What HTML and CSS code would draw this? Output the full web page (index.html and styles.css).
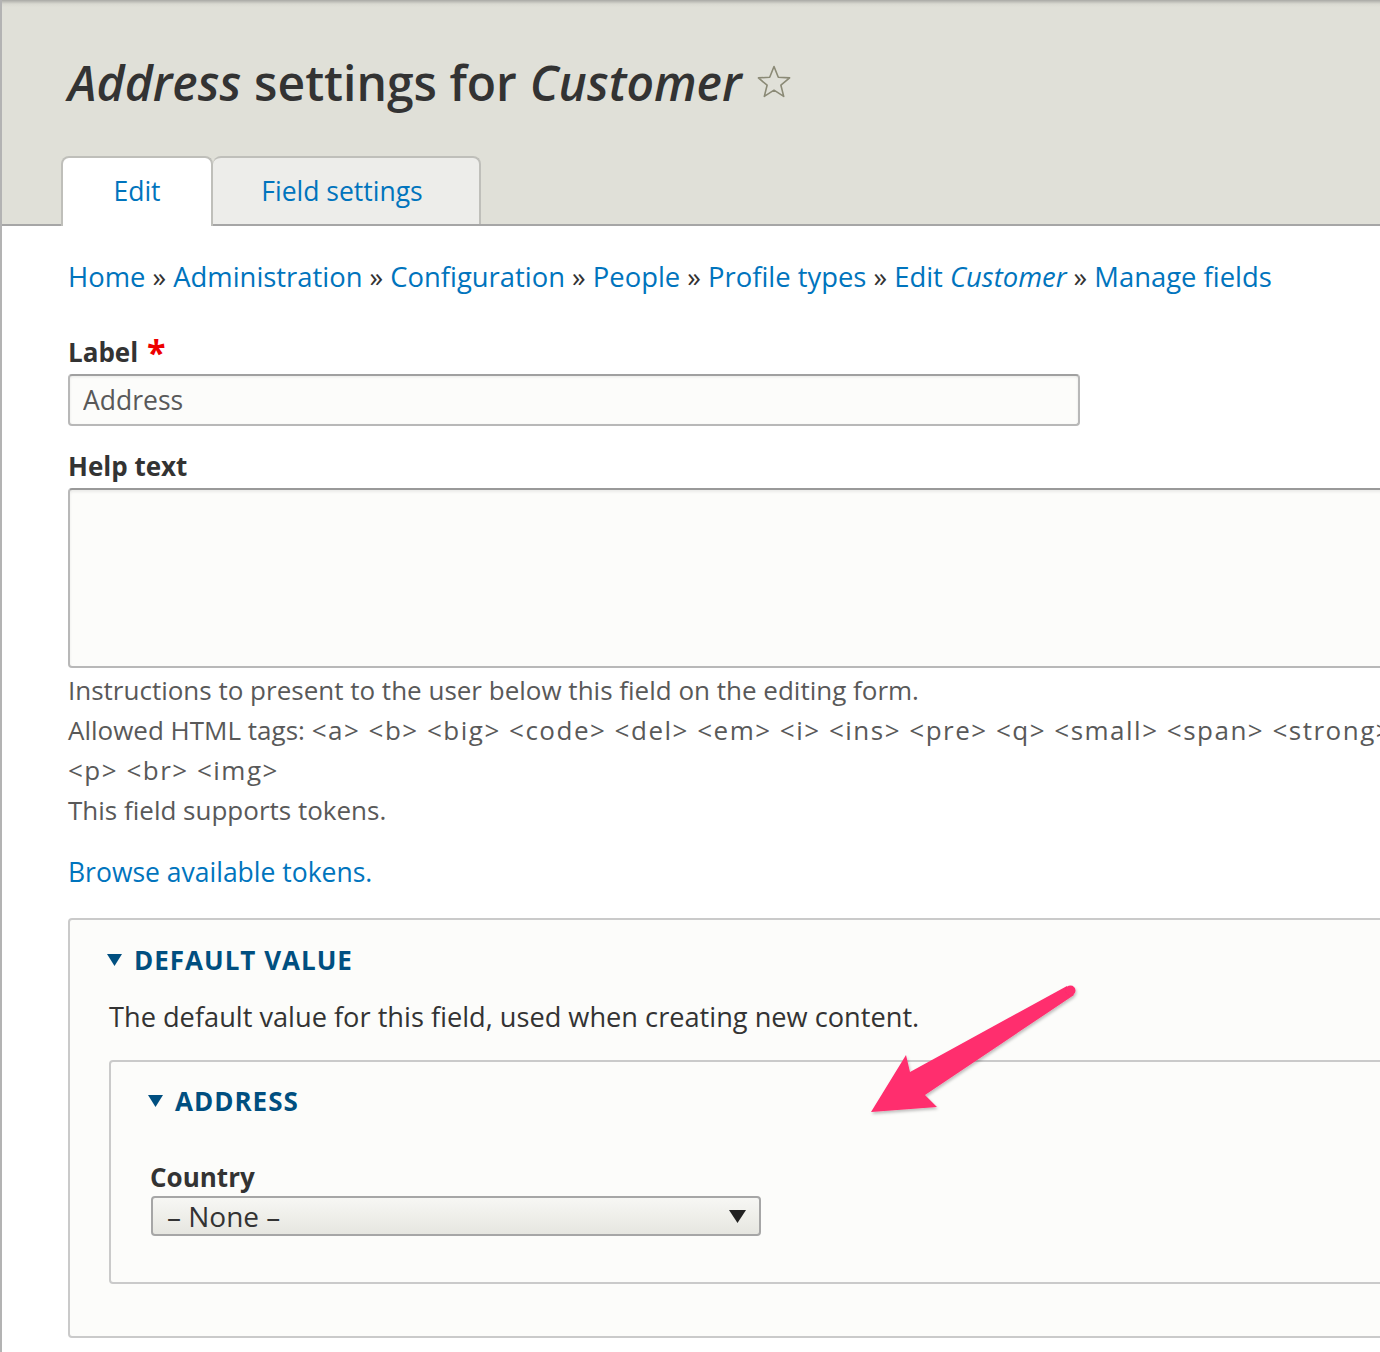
FILE: index.html
```html
<!DOCTYPE html>
<html lang="en">
<head>
<meta charset="utf-8">
<title>Address settings for Customer</title>
<link rel="stylesheet" href="styles.css">
</head>
<body>
<div class="page">
  <header class="header">
    <h1 class="title"><em>Address</em> settings for <em>Customer</em><svg class="star" viewBox="0 0 36 36" width="36" height="36" aria-hidden="true"><path d="M18 2.5 L22.3 13.2 L33.6 13.9 L24.9 21.2 L27.7 32.4 L18 26.2 L8.3 32.4 L11.1 21.2 L2.4 13.9 L13.7 13.2 Z" fill="none" stroke="#8b8a76" stroke-width="1.6" stroke-linejoin="round"/></svg></h1>
    <ul class="tabs">
      <li class="tab active"><a href="#">Edit</a></li>
      <li class="tab"><a href="#">Field settings</a></li>
    </ul>
  </header>

  <main class="main">
    <nav class="breadcrumb"><a href="#">Home</a><span class="sep"> » </span><a href="#">Administration</a><span class="sep"> » </span><a href="#">Configuration</a><span class="sep"> » </span><a href="#">People</a><span class="sep"> » </span><a href="#">Profile types</a><span class="sep"> » </span><a href="#">Edit <em>Customer</em></a><span class="sep"> » </span><a href="#">Manage fields</a></nav>

    <label class="label label-first" for="label">Label <span class="req">*</span></label>
    <input class="text-input" id="label" type="text" value="Address">

    <label class="label label-help" for="help">Help text</label>
    <textarea class="textarea" id="help"></textarea>
    <div class="description">
      <div>Instructions to present to the user below this field on the editing form.</div>
      <div>Allowed HTML tags: <span class="tags">&lt;a&gt; &lt;b&gt; &lt;big&gt; &lt;code&gt; &lt;del&gt; &lt;em&gt; &lt;i&gt; &lt;ins&gt; &lt;pre&gt; &lt;q&gt; &lt;small&gt; &lt;span&gt; &lt;strong&gt; &lt;sub&gt; &lt;sup&gt; &lt;tt&gt; &lt;ol&gt; &lt;ul&gt; &lt;li&gt;<br>&lt;p&gt; &lt;br&gt; &lt;img&gt;</span></div>
      <div>This field supports tokens.</div>
    </div>
    <a class="browse" href="#">Browse available tokens.</a>

    <section class="fieldset">
      <div class="summary"><svg class="tri" viewBox="0 0 15 12" width="15" height="12" aria-hidden="true"><path d="M0 0 H15 L7.5 12 Z" fill="#004f80"/></svg>Default value</div>
      <p class="fs-desc">The default value for this field, used when creating new content.</p>
      <section class="fieldset inner">
        <div class="summary"><svg class="tri" viewBox="0 0 15 12" width="15" height="12" aria-hidden="true"><path d="M0 0 H15 L7.5 12 Z" fill="#004f80"/></svg>Address</div>
        <div class="label label-country">Country</div>
        <div class="select"><span>– None –</span><svg viewBox="0 0 17 13" width="17" height="13" aria-hidden="true"><path d="M0 0 H17 L8.5 13 Z" fill="#222"/></svg></div>
      </section>
    </section>
  </main>

  <svg class="annot" viewBox="0 0 1380 1352" width="1380" height="1352" aria-hidden="true">
    <defs>
      <filter id="sh" x="-10%" y="-10%" width="130%" height="130%">
        <feDropShadow dx="1" dy="2" stdDeviation="1.5" flood-color="#000" flood-opacity="0.25"/>
      </filter>
    </defs>
    <g filter="url(#sh)" fill="#ff2d6e">
      <path d="M1067 986 L910 1072 L906 1055 L871 1112 L937 1107 L925 1095 L1074 995 Z"/>
      <circle cx="1070.5" cy="990.5" r="5"/>
    </g>
  </svg>
</div>
</body>
</html>
```
FILE: styles.css
```css
* { box-sizing: border-box; }
html, body { margin: 0; padding: 0; }
body {
  font-family: "Open Sans", Lato, "Liberation Sans", sans-serif;
  color: #333;
  background: #fff;
  width: 1380px;
  height: 1352px;
  overflow: hidden;
}
a { color: #0074bd; text-decoration: none; }

.page {
  position: relative;
  border-left: 2px solid #b3b3b3;
  min-height: 1352px;
  overflow: hidden;
}

/* Header */
.header {
  height: 226px;
  padding-top: 55px;
  background: linear-gradient(#a9a9a5 0, #d9d9d1 4px, #e0e0d8 7px, #e0e0d8);
  border-bottom: 2px solid #a6a6a6;
}
.title {
  margin: 0 0 0 66px;
  font-size: 48px;
  line-height: 56px;
  font-weight: 600;
  color: #333;
  white-space: nowrap;
  display: flex;
  align-items: center;
}
.title em { font-style: italic; }
.title em:first-child { margin-right: 13px; }
.title em:last-of-type { margin-left: 13px; }
.star { margin-left: 14px; margin-top: -2px; flex: none; }

.tabs {
  display: flex;
  align-items: flex-start;
  list-style: none;
  margin: 45px 0 0 59px;
  padding: 0;
}
.tab {
  width: 268px;
  height: 68px;
  border: 2px solid #bfbfba;
  border-bottom: none;
  border-radius: 8px 8px 0 0;
  background: #ededea;
  font-size: 26.5px;
  line-height: 66px;
  text-align: center;
}
.tab + .tab { border-left: none; }
.tab a { display: block; padding-right: 8px; }
.tab.active { width: 152px; height: 70px; background: #fff; }
.tab.active a { padding-right: 0; }

/* Main */
.main {
  width: 1900px;
  padding-left: 66px;
}
.breadcrumb {
  margin-top: 33px;
  font-size: 27.4px;
  line-height: 36px;
  white-space: nowrap;
}
.breadcrumb .sep { color: #333; }
.breadcrumb em { font-style: italic; }

.label {
  display: block;
  font-size: 26px;
  line-height: 36px;
  font-weight: 700;
  color: #333;
}
.label-first { margin-top: 39px; }
.label-help { margin-top: 22px; }
.req { color: #e00; font-size: 34px; line-height: 0; vertical-align: -3px; margin-left: 2px; font-weight: 700; }

.text-input {
  display: block;
  margin-top: 4px;
  width: 1012px;
  height: 52px;
  padding: 0 13px;
  font-family: inherit;
  font-size: 26.5px;
  color: #595959;
  background: #fcfcfa;
  border: 2px solid #b8b8b8;
  border-top-color: #a0a0a0;
  border-radius: 4px;
  box-shadow: inset 0 1px 3px rgba(0,0,0,0.08);
  outline: none;
}
.textarea {
  display: block;
  margin-top: 4px;
  width: 100%;
  height: 180px;
  resize: none;
  font-family: inherit;
  background: #fcfcfa;
  border: 2px solid #b8b8b8;
  border-top-color: #999;
  border-radius: 4px;
  box-shadow: inset 0 2px 3px rgba(0,0,0,0.07);
  outline: none;
}
.description {
  margin-top: 2px;
  font-size: 26px;
  line-height: 40px;
  color: #595959;
}
.tags { letter-spacing: 1.5px; }
.browse {
  display: block;
  margin-top: 22px;
  font-size: 26.5px;
  line-height: 40px;
}

/* Fieldsets */
.fieldset {
  margin-top: 26px;
  border: 2px solid #cacaca;
  border-radius: 4px;
  background: #fcfcfa;
  padding: 22px 0 52px 38px;
}
.summary {
  display: flex;
  align-items: center;
  font-size: 26px;
  line-height: 36px;
  font-weight: 700;
  letter-spacing: 1px;
  text-transform: uppercase;
  color: #004f80;
}
.tri { margin-right: 12px; margin-top: -1px; margin-left: -1px; flex: none; }
.fs-desc {
  margin: 21px 0 0 1px;
  font-size: 27.2px;
  line-height: 36px;
  color: #333;
}
.fieldset.inner {
  margin: 25px 0 0 1px;
  padding: 21px 0 46px 38px;
}
.label-country { margin-top: 40px; margin-left: 1px; font-size: 26px; }
.select {
  display: flex;
  align-items: center;
  justify-content: space-between;
  margin: 1px 0 0 2px;
  width: 610px;
  height: 40px;
  padding: 0 13px 0 14px;
  font-size: 28px;
  color: #333;
  border: 2px solid #a6a6a6;
  border-radius: 4px;
  background: linear-gradient(#f7f7f4, #e6e6e0);
}

.annot {
  position: absolute;
  left: -2px;
  top: 0;
  pointer-events: none;
}
```
